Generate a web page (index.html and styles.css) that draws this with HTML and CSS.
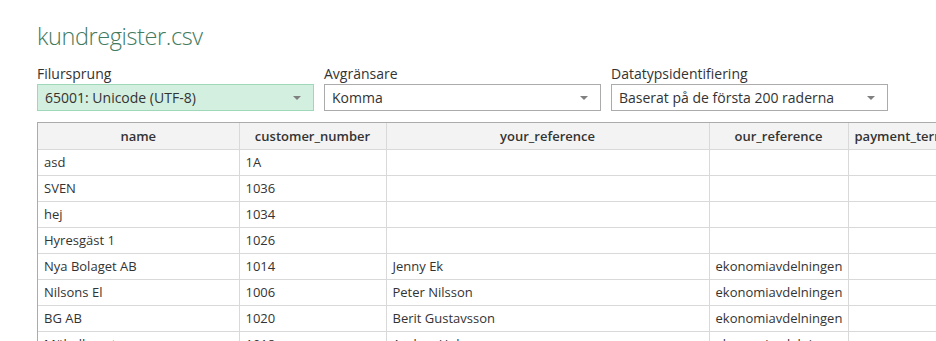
FILE: index.html
```html
<!DOCTYPE html>
<html>
<head>
  <title>kundregister.csv</title>
  <link rel="stylesheet" href="styles.css">
</head>
<body>
  <h1 class="title">kundregister.csv</h1>
  <div class="options">
    <div class="field">
      <label>Filursprung</label>
      <div class="select active"><span>65001: Unicode (UTF-8)</span><i class="arrow"></i></div>
    </div>
    <div class="field">
      <label>Avgränsare</label>
      <div class="select"><span>Komma</span><i class="arrow"></i></div>
    </div>
    <div class="field">
      <label>Datatypsidentifiering</label>
      <div class="select"><span>Baserat på de första 200 raderna</span><i class="arrow"></i></div>
    </div>
  </div>
  <div class="preview">
    <table>
      <tr>
        <th class="c-name">name</th>
        <th class="c-num">customer_number</th>
        <th class="c-your">your_reference</th>
        <th class="c-our">our_reference</th>
        <th class="c-pay">payment_terms</th>
      </tr>
      <tr><td>asd</td><td>1A</td><td></td><td></td><td></td></tr>
      <tr><td>SVEN</td><td>1036</td><td></td><td></td><td></td></tr>
      <tr><td>hej</td><td>1034</td><td></td><td></td><td></td></tr>
      <tr><td>Hyresgäst 1</td><td>1026</td><td></td><td></td><td></td></tr>
      <tr><td>Nya Bolaget AB</td><td>1014</td><td>Jenny Ek</td><td>ekonomiavdelningen</td><td></td></tr>
      <tr><td>Nilsons El</td><td>1006</td><td>Peter Nilsson</td><td>ekonomiavdelningen</td><td></td></tr>
      <tr><td>BG AB</td><td>1020</td><td>Berit Gustavsson</td><td>ekonomiavdelningen</td><td></td></tr>
      <tr><td>Möbelhuset</td><td>1018</td><td>Anders Holm</td><td>ekonomiavdelningen</td><td></td></tr>
    </table>
  </div>
</body>
</html>
```

FILE: styles.css
```css
body {
  margin: 0;
  padding: 0 0 0 37px;
  background-color: white;
  font-family: "Open Sans", "Liberation Sans", sans-serif;
  color: #333;
  overflow: hidden;
}
.title {
  margin: 20px 0 0 0;
  font-size: 23.5px;
  font-weight: 300;
  line-height: 32px;
  color: #427a60;
  letter-spacing: -0.4px;
}
.options {
  display: flex;
  gap: 10px;
  margin-top: 11px;
}
.field label {
  display: block;
  font-size: 14px;
  line-height: 21px;
  color: #333;
}
.select {
  display: flex;
  align-items: center;
  justify-content: space-between;
  box-sizing: border-box;
  width: 277px;
  height: 27px;
  padding: 0 12px 0 7px;
  border: 1px solid #ababab;
  background-color: white;
  font-size: 14px;
  color: #333;
}
.select.active {
  background-color: #d3efe0;
  border-color: #9fd8b8;
}
.arrow {
  width: 0;
  height: 0;
  border-left: 4px solid transparent;
  border-right: 4px solid transparent;
  border-top: 4px solid #808080;
}
.preview {
  margin-top: 11px;
  overflow: hidden;
  border-top: 1px solid #ababab;
  border-left: 1px solid #ababab;
}
table {
  border-collapse: collapse;
  table-layout: fixed;
  width: 1000px;
  font-size: 13px;
}
th, td {
  box-sizing: border-box;
  height: 26px;
  padding: 0 6px;
  border: 1px solid #d9d9d9;
  white-space: nowrap;
  overflow: hidden;
  text-align: left;
}
tr:first-child th {
  border-top: none;
}
th:first-child, td:first-child {
  border-left: none;
}
th {
  background-color: #f3f3f3;
  font-weight: 600;
  text-align: center;
  color: #333;
}
.c-name { width: 201px; }
.c-num { width: 147px; }
.c-your { width: 323px; }
.c-our { width: 139px; }
.c-pay { width: 190px; text-align: left; }
```
